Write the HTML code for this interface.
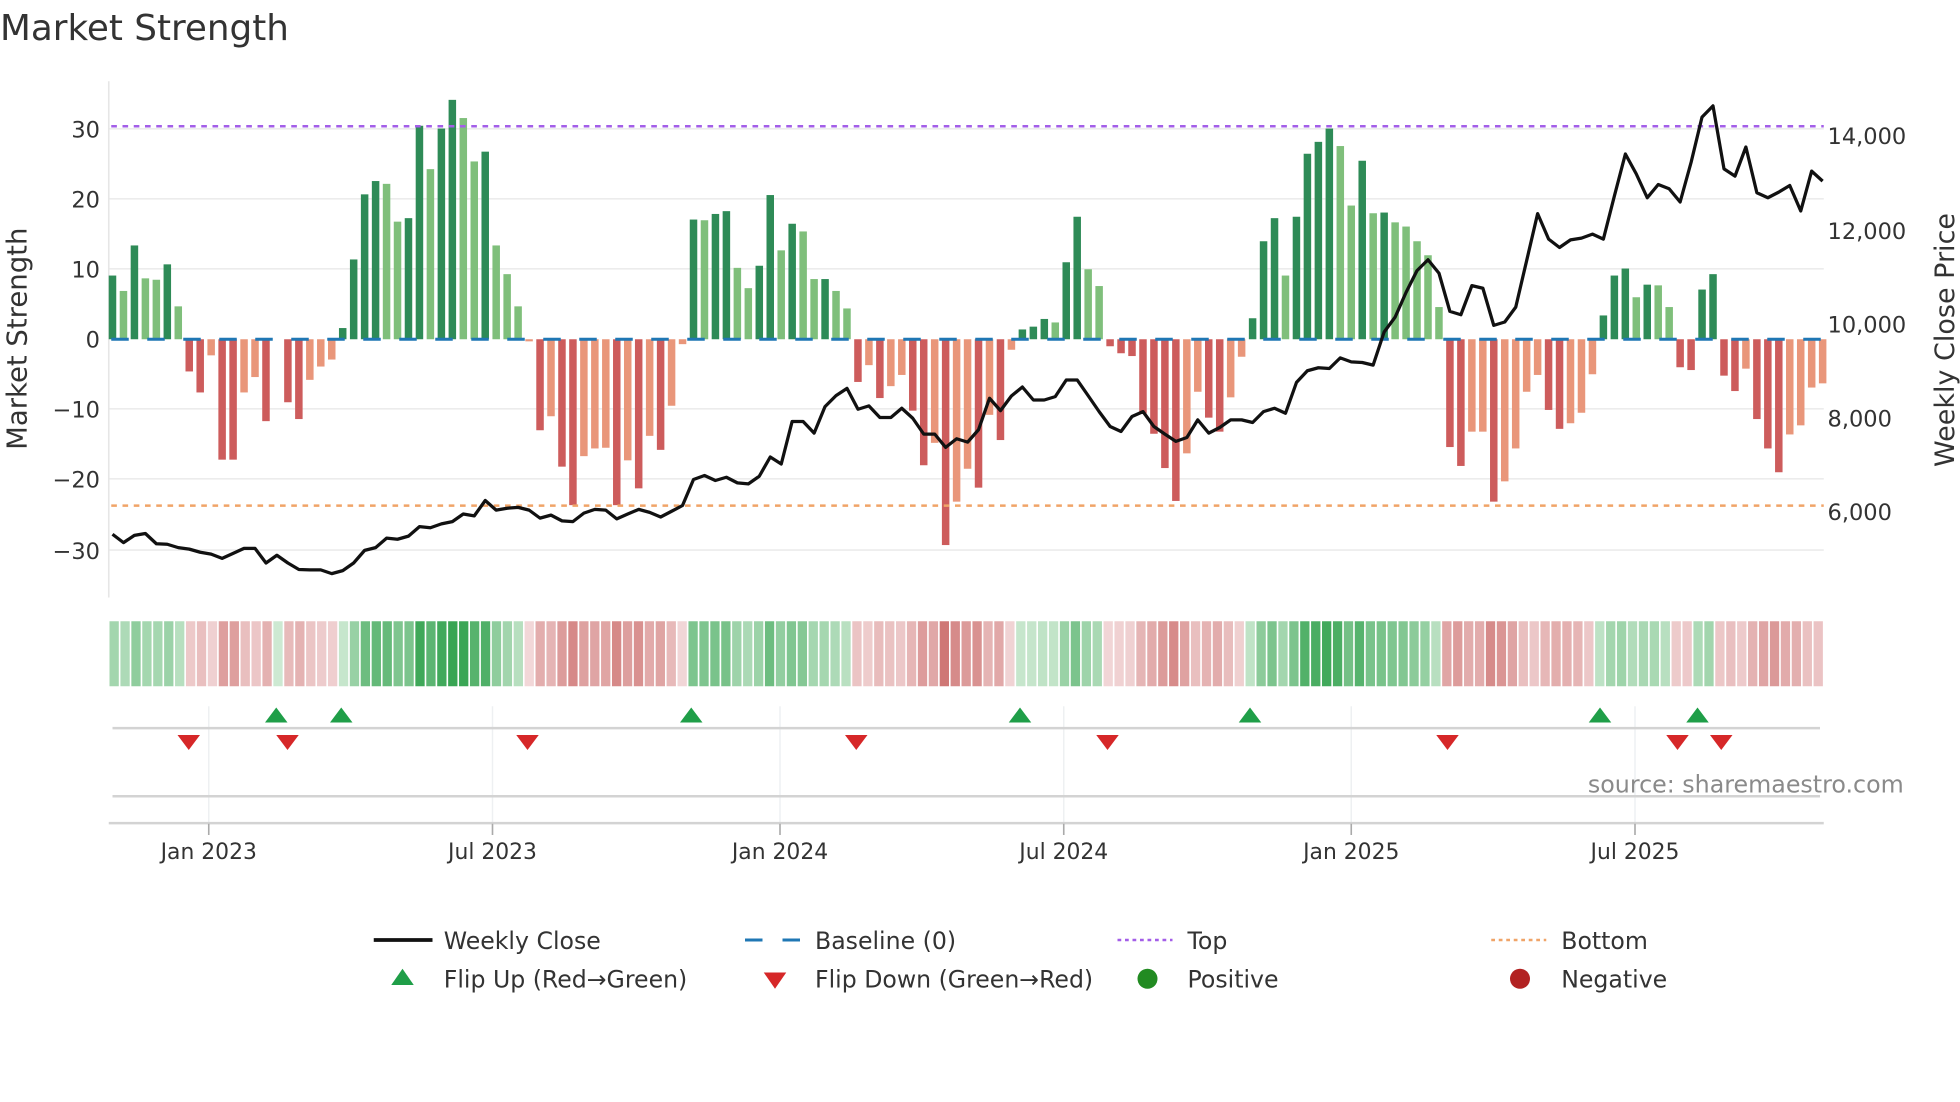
<!DOCTYPE html>
<html><head><meta charset="utf-8">
<style>
html,body{margin:0;padding:0;background:#fff;width:1960px;height:1102px;overflow:hidden}
svg{display:block}
text{font-family:"DejaVu Sans","Liberation Sans",sans-serif;fill:#333}
</style></head>
<body>
<svg id="s" width="1960" height="1102" viewBox="0 0 1568 881.6" xmlns="http://www.w3.org/2000/svg">
<rect width="1568" height="882" fill="#fff"/>
<text x="0" y="32" font-size="28.6">Market Strength</text>
<g stroke="#ececec" stroke-width="1.3">
<line x1="87" x2="1459" y1="103" y2="103"/><line x1="87" x2="1459" y1="159" y2="159"/>
<line x1="87" x2="1459" y1="215" y2="215"/><line x1="87" x2="1459" y1="327" y2="327"/>
<line x1="87" x2="1459" y1="383" y2="383"/><line x1="87" x2="1459" y1="440" y2="440"/>
</g>
<line x1="87" x2="87" y1="65" y2="478" stroke="#e6e6e6" stroke-width="1.3"/>
<g font-size="18" text-anchor="end">
<text x="80" y="110">30</text><text x="80" y="166">20</text><text x="80" y="222">10</text>
<text x="80" y="278">0</text><text x="80" y="334">−10</text><text x="80" y="390">−20</text><text x="80" y="447">−30</text>
</g>
<g font-size="18">
<text x="1462" y="115">14,000</text><text x="1462" y="191">12,000</text><text x="1462" y="266">10,000</text>
<text x="1462" y="341">8,000</text><text x="1462" y="416">6,000</text>
</g>
<text font-size="22" text-anchor="middle" transform="translate(21,271) rotate(-90)">Market Strength</text>
<text font-size="21.6" text-anchor="middle" transform="translate(1563,272) rotate(-90)">Weekly Close Price</text>
<g id="bars"></g>
<line x1="89" x2="1459" y1="271.4" y2="271.4" stroke="#1f77b4" stroke-width="2.4" stroke-dasharray="14 14.8"/>
<line x1="89" x2="1459" y1="101" y2="101" stroke="#a35ee8" stroke-width="2" stroke-dasharray="4.5 4.5"/>
<line x1="89" x2="1459" y1="404.5" y2="404.5" stroke="#f0a468" stroke-width="2" stroke-dasharray="4.5 4.5"/>
<polyline id="price" fill="none" stroke="#111" stroke-width="2.6" stroke-linejoin="round"/>
<g id="strip"></g>
<g stroke="#eef0f2" stroke-width="1.2">
<line x1="167" x2="167" y1="565" y2="658"/><line x1="394" x2="394" y1="565" y2="658"/>
<line x1="624" x2="624" y1="565" y2="658"/><line x1="851" x2="851" y1="565" y2="658"/>
<line x1="1081" x2="1081" y1="565" y2="658"/><line x1="1308" x2="1308" y1="565" y2="658"/>
</g>
<line x1="90" x2="1456" y1="582.5" y2="582.5" stroke="#d3d3d3" stroke-width="2"/>
<line x1="90" x2="1456" y1="637" y2="637" stroke="#d3d3d3" stroke-width="2"/>
<line x1="87" x2="1459" y1="658.5" y2="658.5" stroke="#d3d3d3" stroke-width="2"/>
<g id="tri"></g>
<g stroke="#aaa" stroke-width="1.3">
<line x1="167" x2="167" y1="659" y2="668"/><line x1="394" x2="394" y1="659" y2="668"/>
<line x1="624" x2="624" y1="659" y2="668"/><line x1="851" x2="851" y1="659" y2="668"/>
<line x1="1081" x2="1081" y1="659" y2="668"/><line x1="1308" x2="1308" y1="659" y2="668"/>
</g>
<g font-size="17.5" text-anchor="middle">
<text x="167" y="687">Jan 2023</text><text x="394" y="687">Jul 2023</text><text x="624" y="687">Jan 2024</text>
<text x="851" y="687">Jul 2024</text><text x="1081" y="687">Jan 2025</text><text x="1308" y="687">Jul 2025</text>
</g>
<text x="1523" y="634" font-size="19" text-anchor="end" style="fill:#8a8a8a">source: sharemaestro.com</text>
<g font-size="18.9">
<line x1="299" x2="346" y1="752" y2="752" stroke="#111" stroke-width="3"/>
<text x="355" y="759">Weekly Close</text>
<line x1="596" x2="640" y1="752" y2="752" stroke="#1f77b4" stroke-width="2.4" stroke-dasharray="14 16"/>
<text x="652" y="759">Baseline (0)</text>
<line x1="894" x2="938" y1="752" y2="752" stroke="#a35ee8" stroke-width="2" stroke-dasharray="3 3"/>
<text x="950" y="759">Top</text>
<line x1="1193" x2="1237" y1="752" y2="752" stroke="#f0a468" stroke-width="2" stroke-dasharray="3 3"/>
<text x="1249" y="759">Bottom</text>
<polygon points="313,788 331,788 322,775" fill="#1f9e48"/>
<text x="355" y="790">Flip Up (Red→Green)</text>
<polygon points="611,778 629,778 620,791" fill="#d62728"/>
<text x="652" y="790">Flip Down (Green→Red)</text>
<circle cx="918" cy="783" r="8" fill="#228b22"/>
<text x="950" y="790">Positive</text>
<circle cx="1216" cy="783" r="8" fill="#b22222"/>
<text x="1249" y="790">Negative</text>
</g>
</svg>
<script>
var V="9.1D,6.9L,13.4D,8.7L,8.5L,10.7D,4.7L,-4.6D,-7.6D,-2.3L,-17.2D,-17.2D,-7.6L,-5.4L,-11.7D,0L,-9D,-11.4D,-5.8L,-3.9L,-2.9L,1.6D,11.4D,20.7D,22.6D,22.2L,16.8L,17.3D,30.5D,24.3L,30.1D,34.2D,31.6L,25.4L,26.8D,13.4L,9.3L,4.7L,-0.3L,-13D,-11L,-18.2D,-23.7D,-16.7L,-15.6L,-15.5L,-23.7D,-17.3L,-21.3D,-13.8L,-15.8D,-9.5L,-0.7L,17.1D,17L,17.9D,18.3D,10.2L,7.3L,10.5D,20.6D,12.7L,16.5D,15.4L,8.6L,8.6D,6.9L,4.4L,-6.1D,-3.7L,-8.4D,-6.7L,-5.1L,-10.2D,-18D,-14.8L,-29.4D,-23.2L,-18.5L,-21.2D,-10.8L,-14.4D,-1.5L,1.4D,1.8D,2.9D,2.4L,11D,17.5D,10L,7.6L,-1D,-2D,-2.4D,-10.6D,-13.5D,-18.4D,-23.1D,-16.3L,-7.5L,-11.2D,-13.2D,-8.3L,-2.5L,3D,14D,17.3D,9.1L,17.5D,26.5D,28.2D,30.1D,27.6L,19.1L,25.5D,18L,18.1D,16.7L,16.1L,14L,12L,4.6L,-15.4D,-18.1D,-13.2L,-13.2L,-23.2D,-20.3L,-15.6L,-7.5L,-5.1L,-10.1D,-12.8D,-12L,-10.5L,-5L,3.4D,9.1D,10.1D,6L,7.8D,7.7L,4.6L,-4D,-4.4D,7.1D,9.3D,-5.2D,-7.4D,-4.2L,-11.4D,-15.6D,-19D,-13.6L,-12.3L,-6.9L,-6.3L".split(",");
var P=[427.4,434.1,428.3,426.8,435,435.4,438.1,439.3,441.8,443.3,446.7,442.7,438.7,438.7,450.4,444.2,450.4,455.6,455.9,455.9,458.9,456.5,450.4,440.3,438.1,430.5,431.4,428.9,421.3,422.2,419.1,417.3,411.2,412.7,400.4,408.1,406.6,405.9,408.1,414.5,412.1,416.7,417.3,410.5,407.5,408.1,415.1,411.2,407.5,409.9,413.6,409,404.4,383.6,380.4,384.4,381.8,386.3,387.1,381,365.6,371.2,337.2,337.2,346.5,325.3,316.5,310.7,327.4,324.7,334,334,326.6,334.6,347.3,347.3,357.9,351,353.7,343.8,318.6,328.5,316.8,309.6,320,320,317.3,304,304,316.5,329.3,341.2,345.2,333.2,329.3,341.2,347.3,353.1,350,335.9,346.5,342,335.9,335.9,338,329.3,326.6,330.6,305.9,296.6,294.2,294.8,286.3,289.5,290,292.1,265.6,253.7,233.8,216.5,207.8,218.6,249.1,251.8,228.5,230.6,260.3,257.6,245.7,208.6,170.9,191.3,198,191.9,190.5,187.3,191.3,156.8,123.2,139.1,158.2,147.6,151,161.6,129.8,93.7,84.7,135.1,140.9,117.6,154.2,158.2,153.7,148.4,168.8,136.9,144.9];
var NS="http://www.w3.org/2000/svg";
function el(t,a,p){var e=document.createElementNS(NS,t);for(var k in a)e.setAttribute(k,a[k]);p.appendChild(e);return e;}
function lerp(a,b,t){var r="#";for(var i=0;i<3;i++){var x=parseInt(a.substr(1+2*i,2),16),y=parseInt(b.substr(1+2*i,2),16);var v=Math.round(x+(y-x)*t).toString(16);r+=(v.length<2?"0":"")+v;}return r;}
var bars=document.getElementById("bars"),strip=document.getElementById("strip"),pts=[];
for(var i=0;i<V.length;i++){
 var s=V[i],d=s.slice(-1)=="D",v=parseFloat(s);var cx=90+i*8.77;
 var y0=271.4,y1=271.4-v*5.6;
 var col=v>=0?(d?"#2e8b57":"#7fbf7b"):(d?"#cd5c5c":"#e9967a");
 if(Math.abs(v)>0.01)el("rect",{x:cx-3,y:Math.min(y0,y1),width:6,height:Math.abs(y1-y0),fill:col},bars);
 var t=Math.min(Math.abs(v)/32,1);
 var sc=v>=0?lerp("#cde9d2","#38a553",t):lerp("#f2d8d9","#cc6e6c",t);
 el("rect",{x:87+i*(1372/157)+0.6,y:497,width:1372/157-1.3,height:52,fill:sc},strip);
 pts.push(cx.toFixed(1)+","+P[i]);
}
document.getElementById("price").setAttribute("points",pts.join(" "));
var tri=document.getElementById("tri");
[221,273,553,816,1000,1280,1358].forEach(function(x){el("polygon",{points:(x-9)+",578 "+(x+9)+",578 "+x+",566",fill:"#1f9e48"},tri);});
[151,230,422,685,886,1158,1342,1377].forEach(function(x){el("polygon",{points:(x-9)+",588 "+(x+9)+",588 "+x+",600",fill:"#d62728"},tri);});
</script>
</body></html>
